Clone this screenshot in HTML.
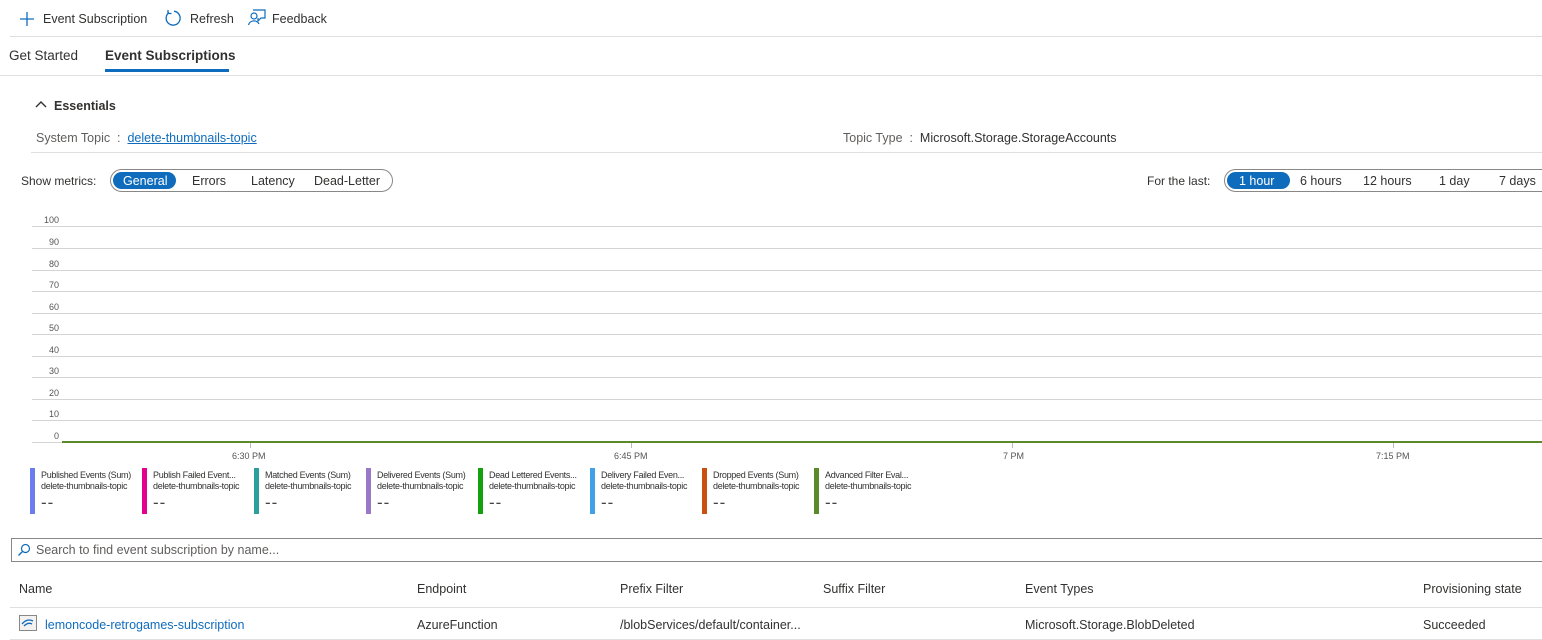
<!DOCTYPE html>
<html><head><meta charset="utf-8"><style>
*{margin:0;padding:0;box-sizing:border-box}
body{width:1542px;height:640px;background:#fff;font-family:"Liberation Sans",sans-serif;color:#323130;position:relative;overflow:hidden;font-size:12.5px}
.a{position:absolute;white-space:nowrap}
.hl{position:absolute;height:1px;background:#e1dfdd}
.g{position:absolute;left:32px;right:0;height:1px;background:#d4d4d4}
.yl{position:absolute;font-size:9px;color:#555;width:28px;text-align:right;left:31px}
.xl{position:absolute;font-size:9px;color:#555;top:451px}
.lg{position:absolute;top:468px;height:46px}
.lg .bar{position:absolute;left:0;top:0;width:5px;height:46px}
.lg .t{position:absolute;left:11px;font-size:9px;color:#323130;white-space:nowrap;letter-spacing:-0.3px}
.lg .d{position:absolute;left:11px;top:25px;font-size:17px;color:#444;letter-spacing:1px;white-space:nowrap}
.pill{position:absolute;border:1px solid #8a8886;border-radius:12px;height:23px}
.pill span{position:absolute;top:4px;font-size:12.5px;white-space:nowrap}
.sel{position:absolute;top:2px;height:17px;background:#0f6cbd;border-radius:9px;color:#fff}
</style></head><body>
<svg class="a" style="left:19px;top:11px" width="16" height="16"><path d="M8 1V15M1 8H15" stroke="#0f6cbd" stroke-width="1.3"/></svg>
<div class="a" style="left:43px;top:12px">Event Subscription</div>
<svg class="a" style="left:164px;top:9px" width="18" height="18"><path d="M5 3.5A7 7 0 1 0 10 2.2" fill="none" stroke="#0f6cbd" stroke-width="1.3"/><path d="M4 1V4.5H7.5" fill="none" stroke="#0f6cbd" stroke-width="1.3"/></svg>
<div class="a" style="left:190px;top:12px">Refresh</div>
<svg class="a" style="left:247px;top:9px" width="19" height="18"><circle cx="7" cy="7" r="3" fill="none" stroke="#0f6cbd" stroke-width="1.2"/><path d="M1.5 16A5.5 5 0 0 1 12 15" fill="none" stroke="#0f6cbd" stroke-width="1.2"/><path d="M6 1H18V9H14L11 12V9" fill="none" stroke="#0f6cbd" stroke-width="1.2"/></svg>
<div class="a" style="left:272px;top:12px">Feedback</div>
<div class="hl" style="left:10px;right:0;top:36px"></div>
<div class="a" style="left:9px;top:48px;font-size:13.5px">Get Started</div>
<div class="a" style="left:105px;top:48px;font-size:13.5px;font-weight:bold;color:#323130">Event Subscriptions</div>
<div class="a" style="left:105px;top:69px;width:124px;height:3px;background:#0f6cbd"></div>
<div class="hl" style="left:0;right:0;top:75px"></div>
<svg class="a" style="left:35px;top:100px" width="12" height="10"><path d="M1 7L6 2L11 7" fill="none" stroke="#323130" stroke-width="1.4"/></svg>
<div class="a" style="left:54px;top:99px;font-size:12.5px;font-weight:bold;color:#323130">Essentials</div>
<div class="a" style="left:36px;top:131px;color:#605e5c">System Topic &nbsp;: &nbsp;<span style="color:#0f6cbd;text-decoration:underline">delete-thumbnails-topic</span></div>
<div class="a" style="left:843px;top:131px;color:#605e5c">Topic Type &nbsp;: &nbsp;<span style="color:#323130">Microsoft.Storage.StorageAccounts</span></div>
<div class="hl" style="left:31px;right:0;top:152px"></div>
<div class="a" style="left:21px;top:174px;font-size:12px">Show metrics:</div>
<div class="pill" style="left:110px;top:169px;width:283px">
<div class="sel" style="left:2px;width:63px"></div>
<span style="left:12px;color:#fff;top:4px">General</span>
<span style="left:81px">Errors</span>
<span style="left:140px">Latency</span>
<span style="left:203px">Dead-Letter</span>
</div>
<div class="a" style="left:1147px;top:174px;font-size:12px">For the last:</div>
<div class="pill" style="left:1224px;top:169px;width:330px">
<div class="sel" style="left:2px;width:63px"></div>
<span style="left:14px;color:#fff">1 hour</span>
<span style="left:75px">6 hours</span>
<span style="left:138px">12 hours</span>
<span style="left:214px">1 day</span>
<span style="left:274px">7 days</span>
</div>
<div class="g" style="top:226px"></div><div class="yl" style="top:215px">100</div>
<div class="g" style="top:248px"></div><div class="yl" style="top:237px">90</div>
<div class="g" style="top:270px"></div><div class="yl" style="top:259px">80</div>
<div class="g" style="top:291px"></div><div class="yl" style="top:280px">70</div>
<div class="g" style="top:313px"></div><div class="yl" style="top:302px">60</div>
<div class="g" style="top:334px"></div><div class="yl" style="top:323px">50</div>
<div class="g" style="top:356px"></div><div class="yl" style="top:345px">40</div>
<div class="g" style="top:377px"></div><div class="yl" style="top:366px">30</div>
<div class="g" style="top:399px"></div><div class="yl" style="top:388px">20</div>
<div class="g" style="top:420px"></div><div class="yl" style="top:409px">10</div>
<div class="g" style="top:442px"></div><div class="yl" style="top:431px">0</div>
<div class="a" style="left:62px;right:0;top:441px;height:2px;background:#5b8a2a"></div>
<div class="a" style="left:250px;top:443px;width:1px;height:5px;background:#bbb"></div>
<div class="a" style="left:631px;top:443px;width:1px;height:5px;background:#bbb"></div>
<div class="a" style="left:1012px;top:443px;width:1px;height:5px;background:#bbb"></div>
<div class="a" style="left:1393px;top:443px;width:1px;height:5px;background:#bbb"></div>
<div class="xl" style="left:232px">6:30 PM</div>
<div class="xl" style="left:614px">6:45 PM</div>
<div class="xl" style="left:1003px">7 PM</div>
<div class="xl" style="left:1376px">7:15 PM</div>
<div class="lg" style="left:30px"><div class="bar" style="background:#6b7cf0"></div><div class="t" style="top:2px">Published Events (Sum)</div><div class="t" style="top:13px">delete-thumbnails-topic</div><div class="d">--</div></div>
<div class="lg" style="left:142px"><div class="bar" style="background:#e3008c"></div><div class="t" style="top:2px">Publish Failed Event...</div><div class="t" style="top:13px">delete-thumbnails-topic</div><div class="d">--</div></div>
<div class="lg" style="left:254px"><div class="bar" style="background:#2a9f9b"></div><div class="t" style="top:2px">Matched Events (Sum)</div><div class="t" style="top:13px">delete-thumbnails-topic</div><div class="d">--</div></div>
<div class="lg" style="left:366px"><div class="bar" style="background:#9a78c8"></div><div class="t" style="top:2px">Delivered Events (Sum)</div><div class="t" style="top:13px">delete-thumbnails-topic</div><div class="d">--</div></div>
<div class="lg" style="left:478px"><div class="bar" style="background:#13a10e"></div><div class="t" style="top:2px">Dead Lettered Events...</div><div class="t" style="top:13px">delete-thumbnails-topic</div><div class="d">--</div></div>
<div class="lg" style="left:590px"><div class="bar" style="background:#40a0e8"></div><div class="t" style="top:2px">Delivery Failed Even...</div><div class="t" style="top:13px">delete-thumbnails-topic</div><div class="d">--</div></div>
<div class="lg" style="left:702px"><div class="bar" style="background:#ca5010"></div><div class="t" style="top:2px">Dropped Events (Sum)</div><div class="t" style="top:13px">delete-thumbnails-topic</div><div class="d">--</div></div>
<div class="lg" style="left:814px"><div class="bar" style="background:#5b8a2a"></div><div class="t" style="top:2px">Advanced Filter Eval...</div><div class="t" style="top:13px">delete-thumbnails-topic</div><div class="d">--</div></div>
<div class="a" style="left:11px;top:538px;width:1540px;height:24px;border:1px solid #8a8886"></div>
<svg class="a" style="left:17px;top:543px" width="14" height="14"><circle cx="8.5" cy="5.5" r="4" fill="none" stroke="#0f6cbd" stroke-width="1.2"/><path d="M5.5 8.5L1.5 12.5" stroke="#0f6cbd" stroke-width="1.3"/></svg>
<div class="a" style="left:36px;top:543px;color:#605e5c">Search to find event subscription by name...</div>
<div class="a" style="left:19px;top:582px">Name</div>
<div class="a" style="left:417px;top:582px">Endpoint</div>
<div class="a" style="left:620px;top:582px">Prefix Filter</div>
<div class="a" style="left:823px;top:582px">Suffix Filter</div>
<div class="a" style="left:1025px;top:582px">Event Types</div>
<div class="a" style="left:1423px;top:582px">Provisioning state</div>
<div class="hl" style="left:10px;right:0;top:607px"></div>
<svg class="a" style="left:19px;top:615px" width="18" height="16"><rect x="0.5" y="0.5" width="17" height="15" fill="#f3f2f1" stroke="#888"/><path d="M3 9Q8 3 14 6M5 11Q9 7 13 9" fill="none" stroke="#0f6cbd" stroke-width="1.3"/></svg>
<div class="a" style="left:45px;top:618px;color:#0f6cbd">lemoncode-retrogames-subscription</div>
<div class="a" style="left:417px;top:618px">AzureFunction</div>
<div class="a" style="left:620px;top:618px">/blobServices/default/container...</div>
<div class="a" style="left:1025px;top:618px">Microsoft.Storage.BlobDeleted</div>
<div class="a" style="left:1423px;top:618px">Succeeded</div>
<div class="hl" style="left:10px;right:0;top:639px"></div>
</body></html>
